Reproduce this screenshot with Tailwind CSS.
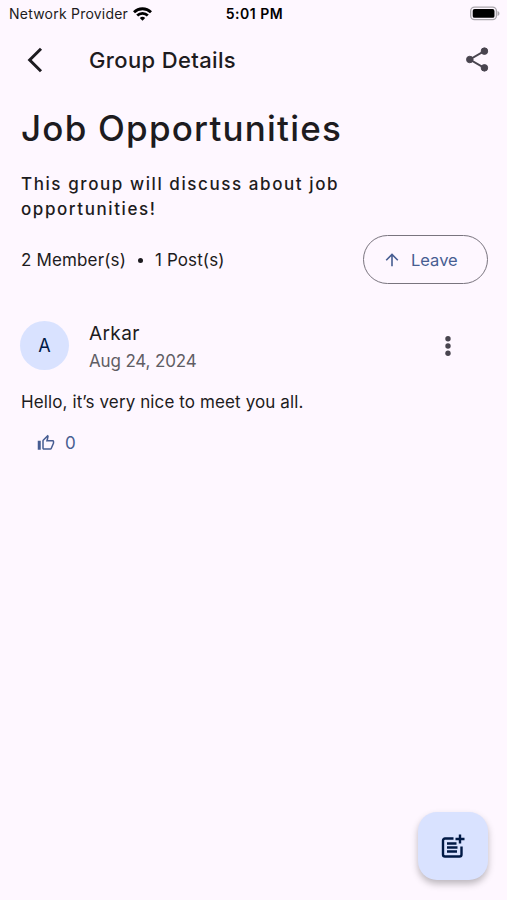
<!DOCTYPE html>
<html lang="en">

<head>
    <meta charset="UTF-8">
    <meta name="viewport" content="width=device-width, initial-scale=1.0">
    <title>Group Details</title>
    <script src="https://cdn.jsdelivr.net/npm/@tailwindcss/browser@4"></script>
</head>

<body class="bg-[#fef7ff] text-[#1d1b20] font-['Inter',sans-serif]">
    <div class="relative w-full h-screen overflow-hidden whitespace-nowrap">
        <!-- Status bar -->
        <div class="grid grid-cols-3 items-center h-[27px] pl-[9px] pr-[7px] text-[14px]">
            <div class="flex items-center gap-[5px]">
                <span class="tracking-[0.22px]">Network Provider</span>
                <svg class="w-[19px] h-[14px] shrink-0" viewBox="0 0 19 14" fill="none" stroke="#000" stroke-width="2.8">
                    <path d="M1 5.2a12.2 12.2 0 0 1 17 0" />
                    <path d="M4.2 8.5a7.6 7.6 0 0 1 10.6 0" />
                    <path d="M6.8 11a3.9 3.9 0 0 1 5.4 0L9.5 13.7z" fill="#000" stroke="none" />
                </svg>
            </div>
            <div class="text-center font-semibold text-black tracking-[0.5px]">5:01 PM</div>
            <svg class="justify-self-end w-[30px] h-[15px]" viewBox="0 0 31 15">
                <rect x=".7" y=".9" width="26.6" height="13" rx="4" fill="#fef7ff" stroke="#aaa6ac" stroke-width="1.4" />
                <rect x="2.8" y="2.8" width="22.500" height="9.2" rx="2" fill="#000" />
                <path d="M28.5 5c2.6 1 2.6 4 0 5z" fill="#aaa6ac" />
            </svg>
        </div>

        <!-- App bar -->
        <header class="flex items-center h-[65px] pl-[26px] pr-[17px]">
            <svg class="w-[18px] h-[26px]" viewBox="0 0 18 26" fill="none" stroke="#1d1b20" stroke-width="3">
                <path d="M15 1.8 3.7 13 15 24.2" />
            </svg>
            <h1 class="ml-[45px] pt-px text-[22px] font-medium tracking-[0.36px]">Group Details</h1>
            <svg class="ml-auto w-[25px] h-[25px]" viewBox="0 0 26 26" fill="#49454f" stroke="#49454f">
                <path d="M20 4.3 5 13l15 8.7" fill="none" stroke-width="2" />
                <circle cx="20.2" cy="4.3" r="3.4" />
                <circle cx="5" cy="13" r="3.4" />
                <circle cx="20.2" cy="21.7" r="3.4" />
            </svg>
        </header>

        <main class="px-[21px]">
            <h2 class="mt-[14px] text-[35px] leading-[44px] font-medium tracking-[1.2px]">Job Opportunities</h2>
            <p class="mt-[22px] text-[17px] leading-[24.5px] font-medium tracking-[1.58px]">This group will discuss about job<br>opportunities!</p>

            <div class="flex items-center justify-between mt-[14px] -mr-[2px] h-[49px]">
                <div class="flex items-center pt-[2px] text-[17px]">
                    <span class="tracking-[0.15px]">2 Member(s)</span>
                    <span class="w-[5px] h-[5px] mx-[12px] rounded-full bg-[#1d1b20]"></span>
                    <span class="tracking-[0.1px]">1 Post(s)</span>
                </div>
                <button class="flex items-center w-[125px] h-[49px] pl-[21px] rounded-full border border-[#79747e] text-[#475d92]">
                    <svg class="w-[14px] h-[14px]" viewBox="0 0 14 14" fill="none" stroke="currentColor" stroke-width="1.6">
                        <path d="M7 13.3V1.6M1.2 7.2 7 1.4l5.8 5.8" />
                    </svg>
                    <span class="ml-[12px] pt-[2px] text-[16.5px]">Leave</span>
                </button>
            </div>

            <!-- Post -->
            <article class="mt-[34px]">
                <div class="flex items-center">
                    <div class="flex items-center justify-center w-[49px] h-[49px] -ml-px rounded-full bg-[#d9e2ff] text-[#001945] text-[18px]">A</div>
                    <div class="ml-[20px] pt-[2px] -mb-[2px]">
                        <p class="text-[19px] leading-[28px] tracking-[0.4px]">Arkar</p>
                        <p class="text-[17px] leading-[27px] tracking-[-0.15px] text-[#605d64]">Aug 24, 2024</p>
                    </div>
                    <svg class="ml-auto mr-[35px] w-[6px] h-5" viewBox="0 0 6 20" fill="#49454f">
                        <circle cx="3" cy="2.8" r="2.7" />
                        <circle cx="3" cy="10" r="2.7" />
                        <circle cx="3" cy="17.2" r="2.7" />
                    </svg>
                </div>
                <p class="mt-[16px] text-[17px] leading-[26px] tracking-[0.11px]">Hello, it’s very nice to meet you all.</p>
                <div class="flex items-center mt-[15px] ml-[16px] h-[26px] text-[#475d92]">
                    <svg class="w-[18px] h-[18px]" viewBox="0 0 24 24" fill="currentColor">
                        <path d="M9 21h9c.83 0 1.54-.5 1.84-1.22l3.02-7.05c.09-.23.14-.47.14-.73v-2c0-1.1-.9-2-2-2h-6.31l.95-4.57.03-.32c0-.41-.17-.79-.44-1.06L14.17 1 7.58 7.59C7.22 7.95 7 8.45 7 9v10c0 1.1.9 2 2 2zM9 9l4.34-4.34L12 10h9v2l-3 7H9V9zM1 9h4v12H1z" />
                    </svg>
                    <span class="ml-[10px] pt-[2px] text-[17px]">0</span>
                </div>
            </article>
        </main>

        <!-- Floating action button -->
        <button class="absolute right-[19px] bottom-[20px] flex items-center justify-center w-[70px] h-[68px] rounded-[19px] bg-[#d9e2ff] shadow-[0_4px_7px_rgba(0,0,0,0.26)]">
            <svg class="w-[24px] h-[24px]" viewBox="0 0 24 24" fill="none" stroke="#001945" stroke-width="2.4">
                <path d="M12.500 4.500H4a2 2 0 0 0-2 2v14a2 2 0 0 0 2 2h14.500a2 2 0 0 0 2-2V12.500" />
                <path d="M6 9.500h9.500M6 13.500h10.500M6 17.500h10" />
                <path d="M19 .5v9M14.500 5h9" />
            </svg>
        </button>
    </div>
</body>

</html>
